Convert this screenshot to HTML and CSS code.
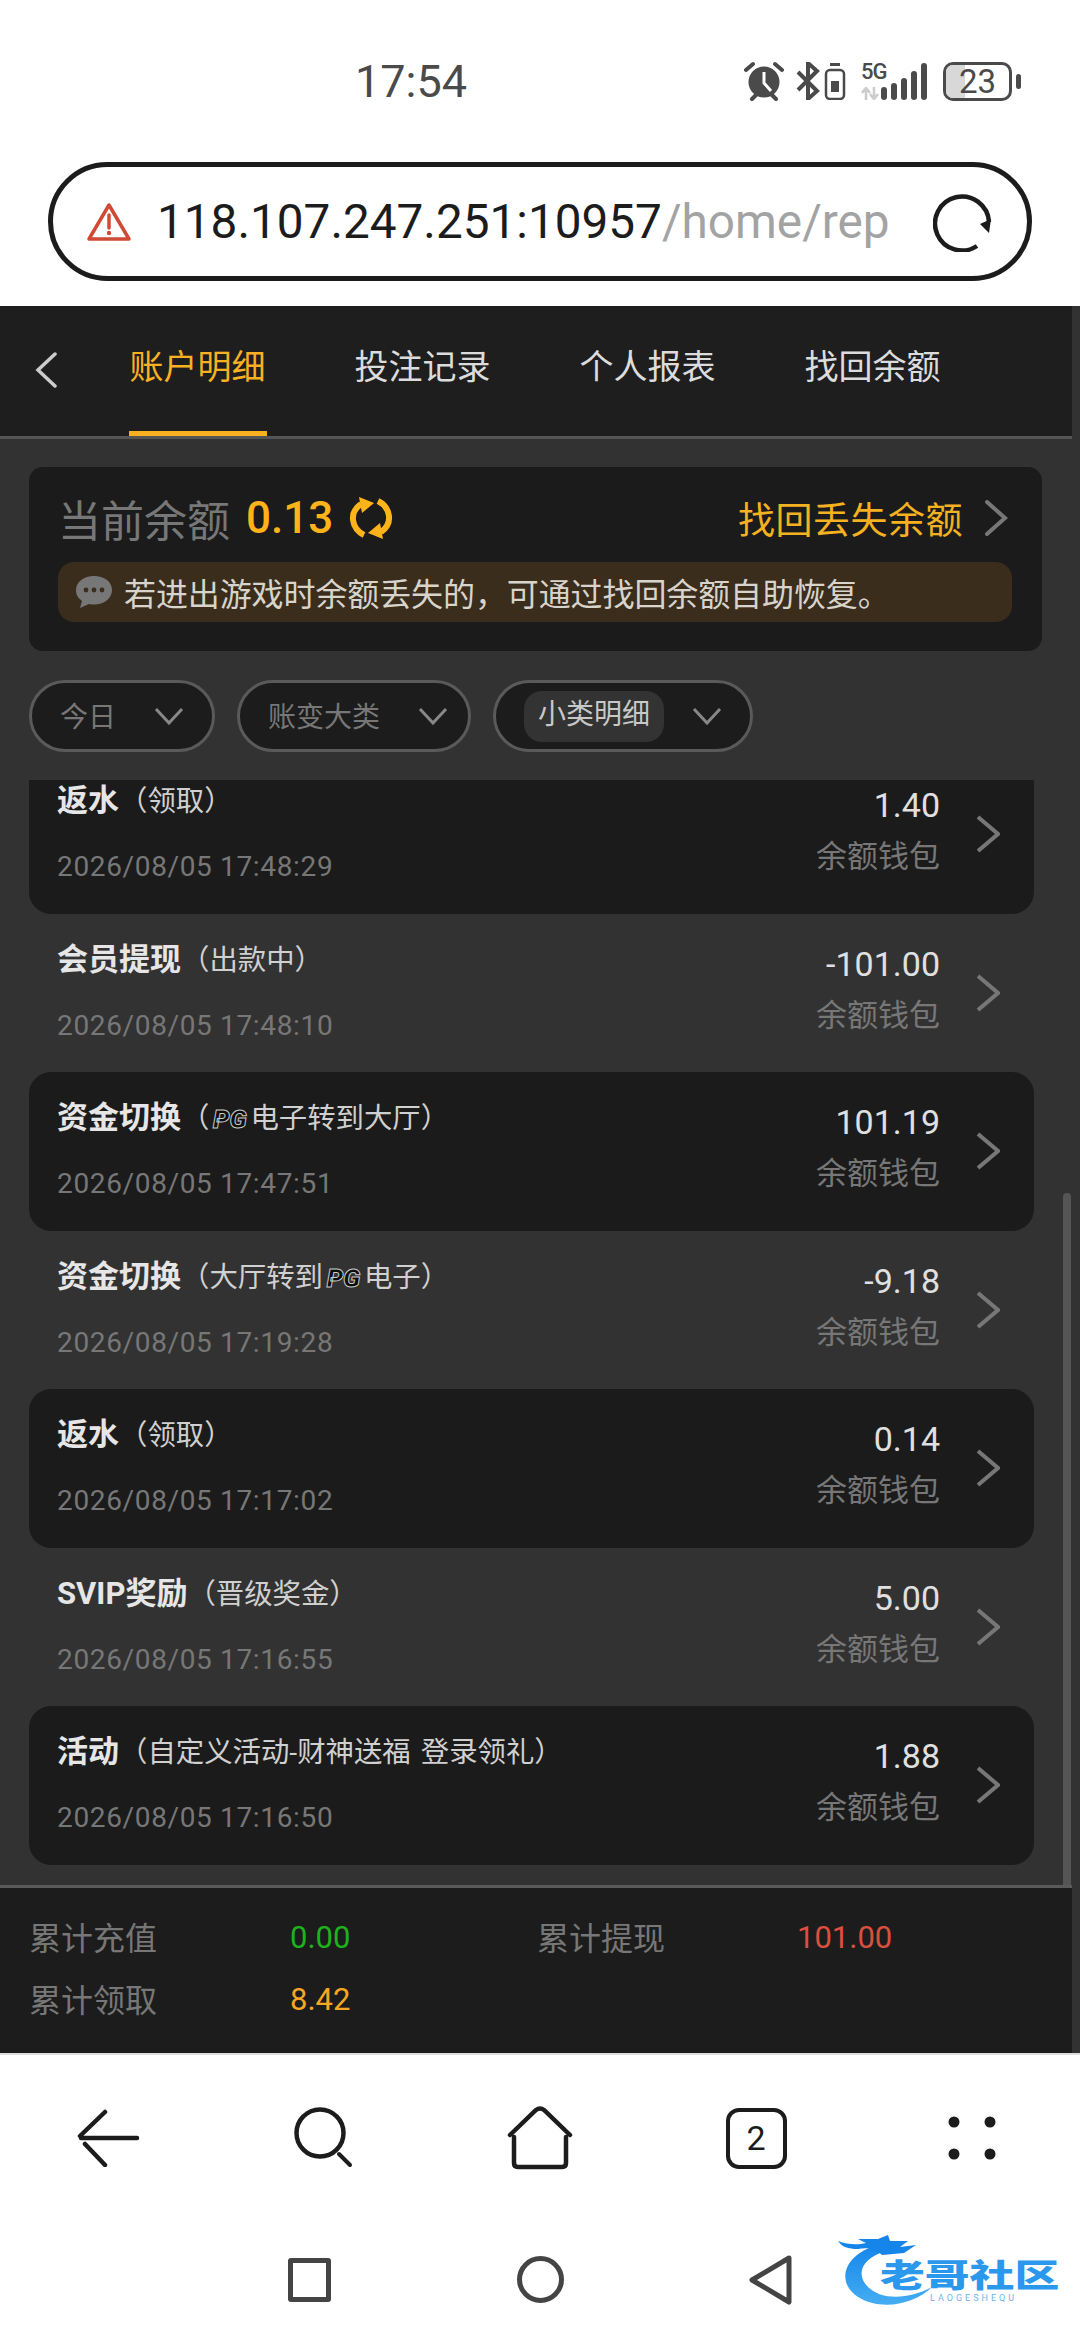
FILE: index.html
```html
<!DOCTYPE html>
<html lang="zh-CN">

<head>
    <meta charset="UTF-8">
    <meta name="viewport" content="width=device-width, initial-scale=1.0">
    <title>账户明细</title>
    <link rel="stylesheet" href="styles.css">
</head>

<body>
    <div class="statusbar">
        <span class="clock">17:54</span>
        <div class="status-icons">
            <svg class="ic-alarm" width="40" height="40" viewBox="0 0 40 40">
                <circle cx="20" cy="21" r="15.500" fill="#4a4a4a"/>
                <path d="M20 11v11l7 8" fill="none" stroke="#fff" stroke-width="3"/>
                <path d="M2 9l7-6M38 9l-7-6M8 38l4-4M32 38l-4-4" fill="none" stroke="#4a4a4a" stroke-width="4" stroke-linecap="round"/>
            </svg>
            <svg class="ic-bt" width="50" height="38" viewBox="0 0 50 38">
                <path d="M2 10l19 19-9 8V1l9 8L2 28" fill="none" stroke="#4a4a4a" stroke-width="4"/>
                <rect x="30" y="8" width="18" height="29" rx="4" fill="none" stroke="#4a4a4a" stroke-width="2.5"/>
                <rect x="34" y="1" width="10" height="3" fill="#4a4a4a"/>
                <rect x="35" y="19" width="8" height="11" fill="#4a4a4a"/>
            </svg>
            <div class="net">
                <span class="net-5g">5G</span>
                <svg class="net-arrows" width="18" height="13" viewBox="0 0 18 13">
                    <path d="M5 13V2M1 6l4-5 4 5M13 0v11M9 7l4 5 4-5" fill="none" stroke="#ccc" stroke-width="2.6"/>
                </svg>
            </div>
            <svg class="ic-signal" width="46" height="37" viewBox="0 0 46 37">
                <rect x="0" y="24" width="6" height="13" rx="3" fill="#4a4a4a"/>
                <rect x="10" y="20" width="6" height="17" rx="3" fill="#4a4a4a"/>
                <rect x="20" y="15" width="6" height="22" rx="3" fill="#4a4a4a"/>
                <rect x="30" y="8" width="6" height="29" rx="3" fill="#4a4a4a"/>
                <rect x="40" y="0" width="6" height="37" rx="3" fill="#4a4a4a"/>
            </svg>
            <div class="battery">
                <span class="battery-fill"></span>
                <span class="battery-num">23</span>
            </div>
            <span class="battery-nub"></span>
        </div>
    </div>

    <div class="urlbar">
        <svg class="url-warn" width="46" height="40" viewBox="0 0 46 40">
            <path d="M23 3L3 37h40z" fill="none" stroke="#cf4b36" stroke-width="3.5" stroke-linejoin="round"/>
            <path d="M23 13v13" stroke="#cf4b36" stroke-width="3.5" stroke-linecap="round"/>
            <circle cx="23" cy="31" r="2.2" fill="#cf4b36"/>
        </svg>
        <span class="url-text">118.107.247.251:10957<span class="url-path">/home/rep</span></span>
        <svg class="url-reload" width="60" height="60" viewBox="0 0 60 60">
            <path d="M44 54A27 27 0 1 1 56 30" fill="none" stroke="#1c1c1c" stroke-width="4.5"/>
            <path d="M47 32l9 9 2-14z" fill="#1c1c1c"/>
        </svg>
    </div>

    <div class="app">
        <nav class="tabs">
            <svg class="tabs-back" width="24" height="36" viewBox="0 0 24 36">
                <path d="M21 2L4 18l17 16" fill="none" stroke="#ccc" stroke-width="3.5" stroke-linecap="round"/>
            </svg>
            <a class="tab active"><span>账户明细</span></a>
            <a class="tab"><span>投注记录</span></a>
            <a class="tab"><span>个人报表</span></a>
            <a class="tab"><span>找回余额</span></a>
        </nav>

        <section class="balance">
            <div class="balance-top">
                <span class="balance-label">当前余额</span>
                <span class="balance-num">0.13</span>
                <svg class="balance-refresh" width="44" height="44" viewBox="0 0 44 44">
                    <path d="M15 39C3 33 -1 17 12 8" fill="none" stroke="#ffb31a" stroke-width="6"/>
                    <path d="M10 1l15 6-12 10z" fill="#ffb31a"/>
                    <path d="M29 5C41 11 45 27 32 36" fill="none" stroke="#ffb31a" stroke-width="6"/>
                    <path d="M34 43l-15-6 12-10z" fill="#ffb31a"/>
                </svg>
                <span class="balance-link">找回丢失余额</span>
                <svg class="balance-more" width="24" height="36" viewBox="0 0 24 36">
                    <path d="M3 2l18 16L3 34" fill="none" stroke="#777" stroke-width="4" stroke-linecap="round"/>
                </svg>
            </div>
            <div class="notice">
                <svg class="notice-icon" width="38" height="34" viewBox="0 0 38 34">
                    <path d="M19 1C9 1 1 7 1 15c0 5 2 8 6 11l-2 7 9-4c2 .4 3 .5 5 .5 10 0 18-6 18-14.500S29 1 19 1z" fill="#777"/>
                    <circle cx="11" cy="15" r="2.400" fill="#3a2d1c"/>
                    <circle cx="19" cy="15" r="2.400" fill="#3a2d1c"/>
                    <circle cx="27" cy="15" r="2.400" fill="#3a2d1c"/>
                </svg>
                <span>若进出游戏时余额丢失的，可通过找回余额自助恢复。</span>
            </div>
        </section>

        <div class="filters">
            <div class="filter">
                <span class="filter-name">今日</span>
                <svg width="30" height="18" viewBox="0 0 30 18"><path d="M2 2l13 14L28 2" fill="none" stroke="#888" stroke-width="3"/></svg>
            </div>
            <div class="filter filter-wide">
                <span class="filter-name">账变大类</span>
                <svg width="30" height="18" viewBox="0 0 30 18"><path d="M2 2l13 14L28 2" fill="none" stroke="#888" stroke-width="3"/></svg>
            </div>
            <div class="filter filter-on">
                <span class="filter-pill">小类明细</span>
                <svg width="30" height="18" viewBox="0 0 30 18"><path d="M2 2l13 14L28 2" fill="none" stroke="#888" stroke-width="3"/></svg>
            </div>
        </div>

        <div class="list-wrap">
            <ul class="list">
                <li class="row dark">
                    <div class="row-main">
                        <p class="row-title"><b>返水</b>（领取）</p>
                        <p class="row-date">2026/08/05 17:48:29</p>
                    </div>
                    <div class="row-side">
                        <p class="row-amount">1.40</p>
                        <p class="row-wallet">余额钱包</p>
                    </div>
                    <svg class="row-more" width="24" height="38" viewBox="0 0 24 38"><path d="M2 2l20 17L2 36" fill="none" stroke="#777" stroke-width="4"/></svg>
                </li>
                <li class="row">
                    <div class="row-main">
                        <p class="row-title"><b>会员提现</b>（出款中）</p>
                        <p class="row-date">2026/08/05 17:48:10</p>
                    </div>
                    <div class="row-side">
                        <p class="row-amount">-101.00</p>
                        <p class="row-wallet">余额钱包</p>
                    </div>
                    <svg class="row-more" width="24" height="38" viewBox="0 0 24 38"><path d="M2 2l20 17L2 36" fill="none" stroke="#777" stroke-width="4"/></svg>
                </li>
                <li class="row dark">
                    <div class="row-main">
                        <p class="row-title"><b>资金切换</b>（<span class="pg">PG</span>电子转到大厅）</p>
                        <p class="row-date">2026/08/05 17:47:51</p>
                    </div>
                    <div class="row-side">
                        <p class="row-amount">101.19</p>
                        <p class="row-wallet">余额钱包</p>
                    </div>
                    <svg class="row-more" width="24" height="38" viewBox="0 0 24 38"><path d="M2 2l20 17L2 36" fill="none" stroke="#777" stroke-width="4"/></svg>
                </li>
                <li class="row">
                    <div class="row-main">
                        <p class="row-title"><b>资金切换</b>（大厅转到<span class="pg">PG</span>电子）</p>
                        <p class="row-date">2026/08/05 17:19:28</p>
                    </div>
                    <div class="row-side">
                        <p class="row-amount">-9.18</p>
                        <p class="row-wallet">余额钱包</p>
                    </div>
                    <svg class="row-more" width="24" height="38" viewBox="0 0 24 38"><path d="M2 2l20 17L2 36" fill="none" stroke="#777" stroke-width="4"/></svg>
                </li>
                <li class="row dark">
                    <div class="row-main">
                        <p class="row-title"><b>返水</b>（领取）</p>
                        <p class="row-date">2026/08/05 17:17:02</p>
                    </div>
                    <div class="row-side">
                        <p class="row-amount">0.14</p>
                        <p class="row-wallet">余额钱包</p>
                    </div>
                    <svg class="row-more" width="24" height="38" viewBox="0 0 24 38"><path d="M2 2l20 17L2 36" fill="none" stroke="#777" stroke-width="4"/></svg>
                </li>
                <li class="row">
                    <div class="row-main">
                        <p class="row-title"><b>SVIP奖励</b>（晋级奖金）</p>
                        <p class="row-date">2026/08/05 17:16:55</p>
                    </div>
                    <div class="row-side">
                        <p class="row-amount">5.00</p>
                        <p class="row-wallet">余额钱包</p>
                    </div>
                    <svg class="row-more" width="24" height="38" viewBox="0 0 24 38"><path d="M2 2l20 17L2 36" fill="none" stroke="#777" stroke-width="4"/></svg>
                </li>
                <li class="row dark">
                    <div class="row-main">
                        <p class="row-title"><b>活动</b>（自定义活动-财神送福 登录领礼）</p>
                        <p class="row-date">2026/08/05 17:16:50</p>
                    </div>
                    <div class="row-side">
                        <p class="row-amount">1.88</p>
                        <p class="row-wallet">余额钱包</p>
                    </div>
                    <svg class="row-more" width="24" height="38" viewBox="0 0 24 38"><path d="M2 2l20 17L2 36" fill="none" stroke="#777" stroke-width="4"/></svg>
                </li>
            </ul>
            <div class="scrollbar"></div>
        </div>

        <footer class="totals">
            <span class="totals-label">累计充值</span>
            <span class="totals-num green">0.00</span>
            <span class="totals-label">累计提现</span>
            <span class="totals-num red">101.00</span>
            <span class="totals-label">累计领取</span>
            <span class="totals-num orange">8.42</span>
        </footer>
    </div>

    <div class="toolbar">
        <div class="tool">
            <svg width="64" height="58" viewBox="0 0 64 58">
                <path d="M29 3L4 27M5 29h56M9 35l20 21" fill="none" stroke="#1c1c1c" stroke-width="4.500" stroke-linecap="round"/>
            </svg>
        </div>
        <div class="tool">
            <svg width="60" height="62" viewBox="0 0 60 62">
                <circle cx="26" cy="26" r="23.500" fill="none" stroke="#1c1c1c" stroke-width="4.500"/>
                <path d="M45 47l11 11" fill="none" stroke="#1c1c1c" stroke-width="4" stroke-linecap="round"/>
            </svg>
        </div>
        <div class="tool">
            <svg width="66" height="64" viewBox="0 0 66 64">
                <path d="M3 29L29 4q4-3 8 0l26 25M7 31v26q0 4 4 4h44q4 0 4-4V31" fill="none" stroke="#1c1c1c" stroke-width="4.500" stroke-linecap="round"/>
            </svg>
        </div>
        <div class="tool">
            <div class="tabs-count">2</div>
        </div>
        <div class="tool">
            <svg width="48" height="44" viewBox="0 0 48 44">
                <circle cx="6" cy="6" r="5.500" fill="#1c1c1c"/>
                <circle cx="42" cy="6" r="5.500" fill="#1c1c1c"/>
                <circle cx="6" cy="38" r="5.500" fill="#1c1c1c"/>
                <circle cx="42" cy="38" r="5.500" fill="#1c1c1c"/>
            </svg>
        </div>
    </div>

    <div class="navbar">
        <div class="nav-slot"><span class="nav-square"></span></div>
        <div class="nav-slot"><span class="nav-circle"></span></div>
        <div class="nav-slot">
            <svg width="44" height="50" viewBox="0 0 44 50">
                <path d="M40 3L3 25l37 22z" fill="none" stroke="#444" stroke-width="5" stroke-linejoin="round"/>
            </svg>
        </div>
        <div class="logo">
            <svg class="logo-mark" width="100" height="84" viewBox="0 0 100 84">
                <defs>
                    <linearGradient id="swoosh" x1="0" y1="0" x2="0" y2="1">
                        <stop offset="0" stop-color="#1585ea"/>
                        <stop offset="1" stop-color="#45adf2"/>
                    </linearGradient>
                </defs>
                <path d="M40 14C8 22 -4 50 20 66c22 14 56 8 74-10-22 12-50 14-64 0C16 42 26 26 48 20z" fill="url(#swoosh)"/>
                <path d="M0 10c10 4 20 4 28 2l-8-4h20l10-4 2 6h18l-8 6 16-2-12 8-22 2c-6-6-14-8-24-6C10 18 4 16 0 10z" fill="#1585ea"/>
            </svg>
            <span class="logo-name">老哥社区</span>
            <span class="logo-en">LAOGESHEQU</span>
        </div>
    </div>
</body>

</html>
```

FILE: styles.css
```css
* {
    box-sizing: border-box;
}

body {
    margin: 0;
    width: 1080px;
    height: 2340px;
    overflow: hidden;
    background-color: #fff;
    font-family: Roboto, "Noto Sans CJK SC", sans-serif;
}

p {
    margin: 0;
}

/* status bar */
.statusbar {
    height: 162px;
    padding: 0 59px 0 355px;
    display: flex;
    align-items: center;
}

.clock {
    font-size: 45px;
    color: #4a4a4a;
}

.status-icons {
    margin-left: auto;
    display: flex;
    align-items: center;
}

.ic-alarm {
    margin-left: 3px;
}

.ic-bt {
    margin-left: 12px;
}

.net {
    margin-left: 15px;
    width: 20px;
    display: flex;
    flex-direction: column;
    align-items: flex-start;
}

.net-5g {
    font-size: 22px;
    line-height: 20px;
    font-weight: 500;
    color: #4a4a4a;
    letter-spacing: -1px;
}

.net-arrows {
    margin-top: 5px;
}

.battery {
    position: relative;
    margin-left: 16px;
    width: 69px;
    height: 39px;
    border: 3.500px solid #4a4a4a;
    border-radius: 10px;
    overflow: hidden;
    display: flex;
    align-items: center;
    justify-content: center;
}

.battery-fill {
    position: absolute;
    left: 0;
    top: 0;
    bottom: 0;
    width: 19px;
    background-color: #d8d8d8;
}

.battery-num {
    position: relative;
    font-size: 33px;
    color: #4a4a4a;
}

.battery-nub {
    margin-left: 4px;
    width: 5px;
    height: 15px;
    border-radius: 3px;
    background-color: #4a4a4a;
}

/* address bar */
.urlbar {
    margin: 0 48px 25px 48px;
    height: 119px;
    border: 5px solid #1c1c1c;
    border-radius: 60px;
    padding: 0 34px 0 33px;
    display: flex;
    align-items: center;
}

.url-text {
    margin-left: 25px;
    font-size: 47.700px;
    color: #1c1c1c;
    white-space: nowrap;
}

.url-path {
    color: #a3a3a3;
}

.url-reload {
    margin-left: auto;
}

/* dark page */
.app {
    height: 1749px;
    background-color: #323232;
    display: flex;
    flex-direction: column;
    border-bottom: 2px solid #ddd;
}

.tabs {
    width: 1072px;
    height: 133px;
    background-color: #1e1e1e;
    border-bottom: 3px solid #555;
    display: flex;
    padding-left: 85px;
    position: relative;
}

.tabs-back {
    position: absolute;
    left: 34px;
    top: 46px;
}

.tab {
    width: 225px;
    display: flex;
    justify-content: center;
    font-size: 34px;
    color: #dcdcdc;
}

.tab span {
    width: 138px;
    height: 130px;
    padding-top: 37px;
    line-height: 48px;
    text-align: center;
    border-bottom: 5px solid transparent;
}

.tab.active span {
    color: #f9b121;
    border-bottom-color: #f9b121;
}

.balance {
    margin: 28px 30px 0 29px;
    width: 1013px;
    height: 184px;
    padding: 28px 30px 29px 29px;
    border-radius: 14px;
    background-color: #1b1b1b;
}

.balance-top {
    height: 46px;
    display: flex;
    align-items: center;
}

.balance-label {
    font-size: 43px;
    color: #777;
}

.balance-num {
    margin-left: 16px;
    font-size: 44px;
    font-weight: 500;
    color: #ffb31a;
}

.balance-refresh {
    margin-left: 16px;
}

.balance-link {
    margin-left: auto;
    font-size: 37px;
    letter-spacing: 0.500px;
    color: #f5b120;
}

.balance-more {
    margin-left: 21px;
    margin-right: 4px;
}

.notice {
    margin-top: 21px;
    height: 60px;
    padding-left: 17px;
    border-radius: 16px;
    background-color: #3a2d1c;
    display: flex;
    align-items: center;
    font-size: 32px;
    letter-spacing: -0.100px;
    color: #d8d4cc;
}

.notice-icon {
    margin-right: 11px;
}

.filters {
    margin: 29px 0 28px 29px;
    display: flex;
    gap: 22px;
}

.filter {
    height: 72px;
    padding: 0 28px;
    border: 3px solid #5a5a5a;
    border-radius: 36px;
    background-color: #1c1c1c;
    display: flex;
    align-items: center;
    gap: 38px;
}

.filter-name {
    padding-bottom: 3px;
    font-size: 28px;
    color: #777;
}

.filter-wide {
    padding-right: 20px;
}

.filter-on {
    gap: 28px;
}

.filter-pill {
    height: 51px;
    padding: 0 14px;
    border-radius: 18px;
    background-color: #333;
    font-size: 28px;
    line-height: 48px;
    color: #c8c8c8;
}

/* list */
.list-wrap {
    position: relative;
    flex: 1;
    min-height: 0;
    overflow: hidden;
}

.list {
    list-style: none;
    margin: -25px 0 0 29px;
    padding: 0;
    width: 1005px;
}

.row {
    height: 158.500px;
    padding: 0 34px 0 28px;
    display: flex;
    align-items: center;
    border-radius: 22px;
}

.row.dark {
    background-color: #1b1b1b;
}

.row-main {
    flex: 1;
    min-width: 0;
}

.row-title {
    font-size: 28.400px;
    line-height: 40px;
    word-spacing: 3px;
    color: #d0d0d0;
    white-space: nowrap;
}

.row-title b {
    font-size: 31px;
    font-weight: 700;
    color: #e6e6e6;
}

.row-date {
    margin-top: 25px;
    font-size: 28px;
    line-height: 40px;
    color: #777;
    letter-spacing: 0.650px;
}

.row-side {
    margin-bottom: 6px;
    text-align: right;
}

.row-amount {
    font-size: 34px;
    line-height: 40px;
    color: #e0e0e0;
}

.row-wallet {
    margin-top: 12px;
    font-size: 31px;
    line-height: 40px;
    color: #777;
}

.row-more {
    margin-left: 36px;
}

.pg {
    display: inline-block;
    width: 41px;
    text-align: center;
    font-size: 26px;
    font-weight: 900;
    font-style: italic;
    color: #0c0c0c;
    -webkit-text-stroke: 1px #c8c8c8;
}

.scrollbar {
    position: absolute;
    left: 1063px;
    top: 413px;
    bottom: 0;
    width: 8px;
    border-radius: 4px 4px 0 0;
    background-color: #555;
}

.totals {
    width: 1072px;
    height: 168px;
    padding: 18px 0 0 29px;
    border-top: 3px solid #5a5a5a;
    background-color: #1c1c1c;
    display: grid;
    grid-template-columns: 261px 247px 260px 1fr;
    grid-auto-rows: 62px;
    align-items: center;
    font-size: 32px;
}

.totals-label {
    padding-bottom: 3px;
    color: #777;
}

.totals-num {
    font-size: 31px;
}

.green {
    color: #1db31d;
}

.red {
    color: #d9503f;
}

.orange {
    color: #f5a623;
}

/* browser toolbar */
.toolbar {
    height: 166px;
    display: flex;
}

.tool {
    width: 216px;
    display: flex;
    align-items: center;
    justify-content: center;
}

.tabs-count {
    width: 61px;
    height: 61px;
    border: 4px solid #1c1c1c;
    border-radius: 13px;
    display: flex;
    align-items: center;
    justify-content: center;
    font-size: 34px;
    color: #1c1c1c;
}

/* android nav */
.navbar {
    position: relative;
    height: 117px;
    padding: 0 194px;
    display: flex;
}

.nav-slot {
    width: 231px;
    display: flex;
    align-items: center;
    justify-content: center;
}

.nav-square {
    width: 43px;
    height: 44px;
    border: 5px solid #444;
    border-radius: 3px;
}

.nav-circle {
    width: 47px;
    height: 47px;
    border: 5px solid #444;
    border-radius: 50%;
}

.logo {
    position: absolute;
    left: 838px;
    top: 10px;
    width: 226px;
    height: 84px;
}

.logo-mark {
    position: absolute;
    left: 0;
    top: 0;
}

.logo-name {
    position: absolute;
    left: 42px;
    top: 29px;
    font-size: 32px;
    line-height: 32px;
    font-weight: 900;
    color: #2b98ee;
    white-space: nowrap;
    transform: scaleX(1.400);
    transform-origin: left center;
}

.logo-en {
    position: absolute;
    left: 92px;
    top: 62px;
    font-size: 9px;
    line-height: 10px;
    letter-spacing: 3px;
    color: #6fb4ea;
}
```
